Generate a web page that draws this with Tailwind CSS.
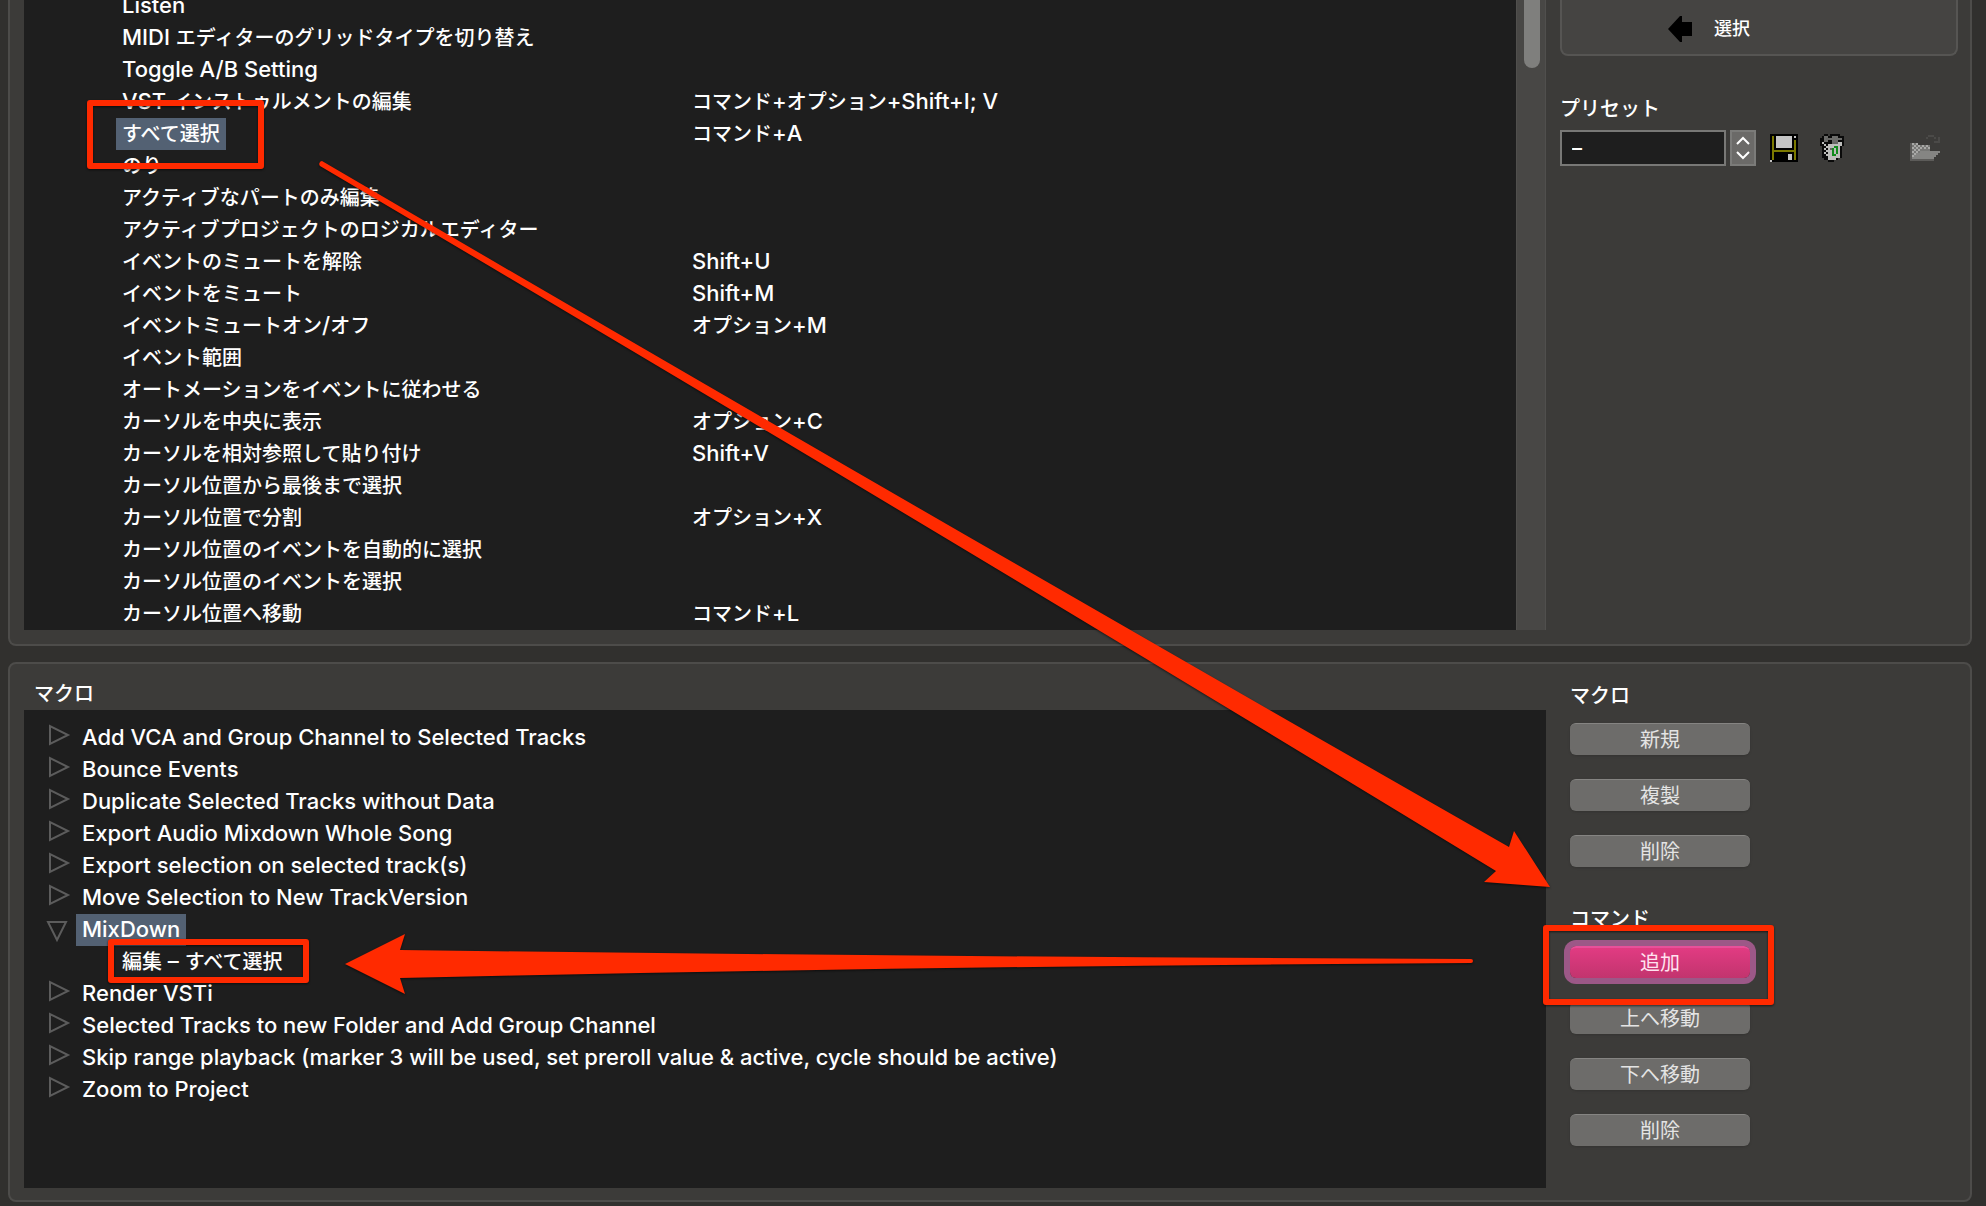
<!DOCTYPE html>
<html lang="ja">
<head>
  <meta charset="utf-8" />
  <title>キーボードショートカット</title>
  <script src="https://cdn.jsdelivr.net/npm/@tailwindcss/browser@4"></script>
  <meta name="viewport" content="width=device-width,initial-scale=1" />
</head>

<body class="relative min-h-screen overflow-hidden bg-[#31302e] pl-2 pr-[14px] pb-1 flex flex-col gap-4
             text-white text-[20px] leading-8 font-['Inter','Noto_Sans_CJK_JP',sans-serif]">

  <!-- ── KEY COMMANDS ──────────────────────────────── -->
  <section class="flex border-2 border-t-0 border-[#4d4c4a] rounded-b-lg bg-[#3c3b39] pl-[14px] pb-[14px]">

    <div class="flex flex-1 overflow-hidden bg-[#1e1e1e]">
      <table class="flex-1 -mt-[10px] block font-medium">
        <tbody id="commands"></tbody>
      </table>
      <div class="w-[30px] bg-[#484745] border-x border-[#504f4d] flex justify-end pr-[5px]">
        <div class="w-4 h-[68px] rounded-b-full bg-[#7f7f7d]"></div>
      </div>
    </div>

    <div class="w-[424px] pl-[14px] pr-3">
      <button class="w-full h-14 pt-1 border-2 border-t-0 border-[#565553] rounded-b-lg bg-[#454442]
                     flex items-center pl-[106px] gap-[22px] text-[18px] font-medium">
        <svg class="w-6 h-[26px]" viewBox="0 0 24 26">
          <path d="M0 13 12 0h2v6h10v14H14v6h-2z" fill="#000" />
        </svg>
        選択
      </button>

      <label for="preset" class="block mt-[37px] font-medium">プリセット</label>
      <div class="mt-[5px] flex items-center">
        <select id="preset"
                class="appearance-none w-[166px] h-9 border-2 border-[#787876] bg-[#1e1e1e] pl-[10px]
                       leading-8 font-medium text-white">
          <option>–</option>
        </select>
        <button aria-label="プリセットを選択"
                class="ml-1 w-[26px] h-9 border-2 border-[#7b7b79] bg-[#6b6a68] flex items-center justify-center">
          <svg class="w-4 h-6" viewBox="0 0 16 24" fill="none" stroke="#fff" stroke-width="2">
            <path d="M2 8l6-6 6 6M2 16l6 6 6-6" />
          </svg>
        </button>

        <button aria-label="保存" class="ml-[14px]">
          <svg class="block w-7 h-7" viewBox="0 0 14 14" shape-rendering="crispEdges">
            <path fill="#000" d="M0 0h14v14H0z" />
            <path fill="#7c7a00" d="M1 1h1v12H1zM12 3h1v10h-1zM2 8h10v1H2z" />
            <path fill="#c4c4c4" d="M3 1h8v6H3zM9 10h2v3H9zM0 13h1v1H0zM12 1h1v1h-1z" />
          </svg>
        </button>
        <button aria-label="プリセットを削除" class="ml-[22px]">
          <svg class="block w-6 h-7" viewBox="0 0 12 14" shape-rendering="crispEdges">
            <path fill="#0a0a0a" d="M2 0h2v1h1V0h5v1h2v5h-1v6h-2v1H7v1H4v-1H2v-1H1V6H0V2h1V1h1z" />
            <path fill="#6c6c6a" d="M2 1h2v1h2V1h3v1h2v1H9v1H6V3H4v1H2z" />
            <path fill="#bdbdbb" d="M1 4h1v1h1v1h1v1H3v1h1v1H3v1h1v1H3v-1H2V9h1V8H2V7h1V6H2V5H1zM4 5h2v8H4zM6 5h2V4h3v2h-1v6H8v1H6z" />
            <path fill="#666664" d="M3 2h2v1H3zM6 4h3v1H6zM5 7h1v1H5z" />
            <path fill="#118a1c" d="M6 7h1v1H6zM7 6h2v1H7zM8 7h1v3H8zM6 8h1v3H6zM7 10h1v1H7z" />
          </svg>
        </button>
        <button aria-label="プリセットを開く" disabled class="ml-[66px]">
          <svg class="block w-8 h-[26px]" viewBox="0 0 16 13" shape-rendering="crispEdges">
            <path fill="#4b4a48" d="M8 1h1v1H8zM9 0h3v1H9zM12 1h1v1h-1zM14 1h1v3h-3V3h2z" />
            <path fill="#777775" d="M1 4h3v1h6v3H5v1H4v1H3v1H2v1H1z" />
            <path fill="#a9a9a7" d="M1 4h1v1H1zM3 4h1v1H3zM2 5h1v1H2zM4 5h1v1H4zM6 5h1v1H6zM8 5h1v1H8zM1 6h1v1H1zM3 6h1v1H3zM5 6h1v1H5zM7 6h1v1H7zM9 6h1v1H9zM2 7h1v1H2zM4 7h1v1H4zM1 8h1v1H1zM3 8h1v1H3zM2 9h1v1H2zM1 10h1v1H1z" />
            <path fill="#858583" d="M5 8h10v1h-1v1h-1v1h-1v1H1v-1h1v-1h1V9h2z" />
            <path fill="#5c5b59" d="M0 4h1v8H0zM0 12h12v1H0z" />
          </svg>
        </button>
      </div>
    </div>
  </section>

  <!-- ── MACROS ────────────────────────────────────── -->
  <section class="flex flex-1 border-2 border-[#4d4c4a] rounded-lg bg-[#3c3b39] pl-[14px] pb-3">

    <div class="flex-1 flex flex-col">
      <h2 class="pl-[10px] pt-[14px] font-medium">マクロ</h2>
      <ul id="macros" class="flex-1 bg-[#1e1e1e] pt-3 font-medium"></ul>
    </div>

    <div class="w-[424px] pl-6 pt-4 flex flex-col gap-9">
      <div class="flex flex-col items-start">
        <h2 class="mb-[11px] font-medium">マクロ</h2>
        <div class="flex flex-col gap-6">
          <button class="w-[180px] h-8 rounded-md bg-[#6d6c6a] border-t border-[#858482] shadow text-[#e4e4e4] leading-none">新規</button>
          <button class="w-[180px] h-8 rounded-md bg-[#6d6c6a] border-t border-[#858482] shadow text-[#e4e4e4] leading-none">複製</button>
          <button class="w-[180px] h-8 rounded-md bg-[#6d6c6a] border-t border-[#858482] shadow text-[#e4e4e4] leading-none">削除</button>
        </div>
      </div>
      <div class="flex flex-col items-start">
        <h2 class="mb-[11px] font-medium">コマンド</h2>
        <div class="flex flex-col gap-6">
          <button class="w-[180px] h-8 rounded-md bg-linear-to-b from-[#e13b82] to-[#c2346e] border-t-2 border-[#e8509a]
                         ring-6 ring-[#9c5887] text-[#ffe3f0] leading-none">追加</button>
          <button class="w-[180px] h-8 rounded-md bg-[#6d6c6a] border-t border-[#858482] shadow text-[#e4e4e4] leading-none">上へ移動</button>
          <button class="w-[180px] h-8 rounded-md bg-[#6d6c6a] border-t border-[#858482] shadow text-[#e4e4e4] leading-none">下へ移動</button>
          <button class="w-[180px] h-8 rounded-md bg-[#6d6c6a] border-t border-[#858482] shadow text-[#e4e4e4] leading-none">削除</button>
        </div>
      </div>
    </div>
  </section>

  <!-- ── ANNOTATIONS ───────────────────────────────── -->
  <svg class="absolute top-0 left-0 w-[1986px] h-[1206px] pointer-events-none drop-shadow-[0_1px_1px_rgba(0,0,0,0.6)]"
       viewBox="0 0 1986 1206">
    <g fill="none" stroke="#ff2a00" stroke-width="6" stroke-linejoin="round">
      <rect x="90" y="103" width="171" height="63" />
      <rect x="111" y="942" width="195" height="38" />
      <rect x="1546" y="928" width="225" height="74" />
    </g>
    <g fill="#ff2a00">
      <path d="M322 161Q915 508 1509 847L1514 831 1550 887 1484 882 1496 871Q907 512 320 166A3 3 0 0 1 322 161z" />
      <path d="M1471 959Q936 957 400 950L405 934 345 964 405 994 400 978Q936 966 1471 963A2 2 0 0 0 1471 959z" />
    </g>
  </svg>

<script>
  const commands = [
    ['Listen', ''],
    ['MIDI エディターのグリッドタイプを切り替え', ''],
    ['Toggle A/B Setting', ''],
    ['VST インストゥルメントの編集', 'コマンド+オプション+Shift+I; V'],
    ['すべて選択', 'コマンド+A', true],
    ['のり', ''],
    ['アクティブなパートのみ編集', ''],
    ['アクティブプロジェクトのロジカルエディター', ''],
    ['イベントのミュートを解除', 'Shift+U'],
    ['イベントをミュート', 'Shift+M'],
    ['イベントミュートオン/オフ', 'オプション+M'],
    ['イベント範囲', ''],
    ['オートメーションをイベントに従わせる', ''],
    ['カーソルを中央に表示', 'オプション+C'],
    ['カーソルを相対参照して貼り付け', 'Shift+V'],
    ['カーソル位置から最後まで選択', ''],
    ['カーソル位置で分割', 'オプション+X'],
    ['カーソル位置のイベントを自動的に選択', ''],
    ['カーソル位置のイベントを選択', ''],
    ['カーソル位置へ移動', 'コマンド+L']
  ];

  // Latin runs are set a little larger than the Japanese around them
  const latin = text => text.replace(/[ -~–]+/g,
    run => `<span class="text-[22px] leading-none">${run}</span>`);

  document.getElementById('commands').innerHTML = commands.map(([name, key, selected]) => `
    <tr class="h-8">
      <td class="w-[668px] p-0 pl-[92px]"><div class="w-fit h-8 px-[6px] whitespace-pre ${
        selected ? 'bg-[#536173]' : ''}">${latin(name)}</div></td>
      <td class="p-0"><div class="h-8 whitespace-pre">${latin(key)}</div></td>
    </tr>`).join('');

  const macros = [
    { name: 'Add VCA and Group Channel to Selected Tracks' },
    { name: 'Bounce Events' },
    { name: 'Duplicate Selected Tracks without Data' },
    { name: 'Export Audio Mixdown Whole Song' },
    { name: 'Export selection on selected track(s)' },
    { name: 'Move Selection to New TrackVersion' },
    { name: 'MixDown', steps: ['編集 – すべて選択'] },
    { name: 'Render VSTi' },
    { name: 'Selected Tracks to new Folder and Add Group Channel' },
    { name: 'Skip range playback (marker 3 will be used, set preroll value &amp; active, cycle should be active)' },
    { name: 'Zoom to Project' }
  ];

  // an open macro shows its steps below and a triangle that points down
  document.getElementById('macros').innerHTML = macros.map(m => `
    <li>
      <div class="h-8 pl-[22px] flex">
        <button aria-label="開閉" class="w-[30px] h-8">
          <svg class="block w-[30px] h-8" viewBox="0 0 30 32" fill="none" stroke="#5c5c5c" stroke-width="2">
            <path d="${m.steps ? 'M2 8H20L11 26z' : 'M4 4V22L22 13z'}" />
          </svg>
        </button>
        <div class="h-8 px-[6px] whitespace-pre ${m.steps ? 'bg-[#536173]' : ''}">${latin(m.name)}</div>
      </div>
      ${(m.steps || []).map(s => `<div class="h-8 pl-[98px] whitespace-pre">${latin(s)}</div>`).join('')}
    </li>`).join('');
</script>

</body>
</html>
